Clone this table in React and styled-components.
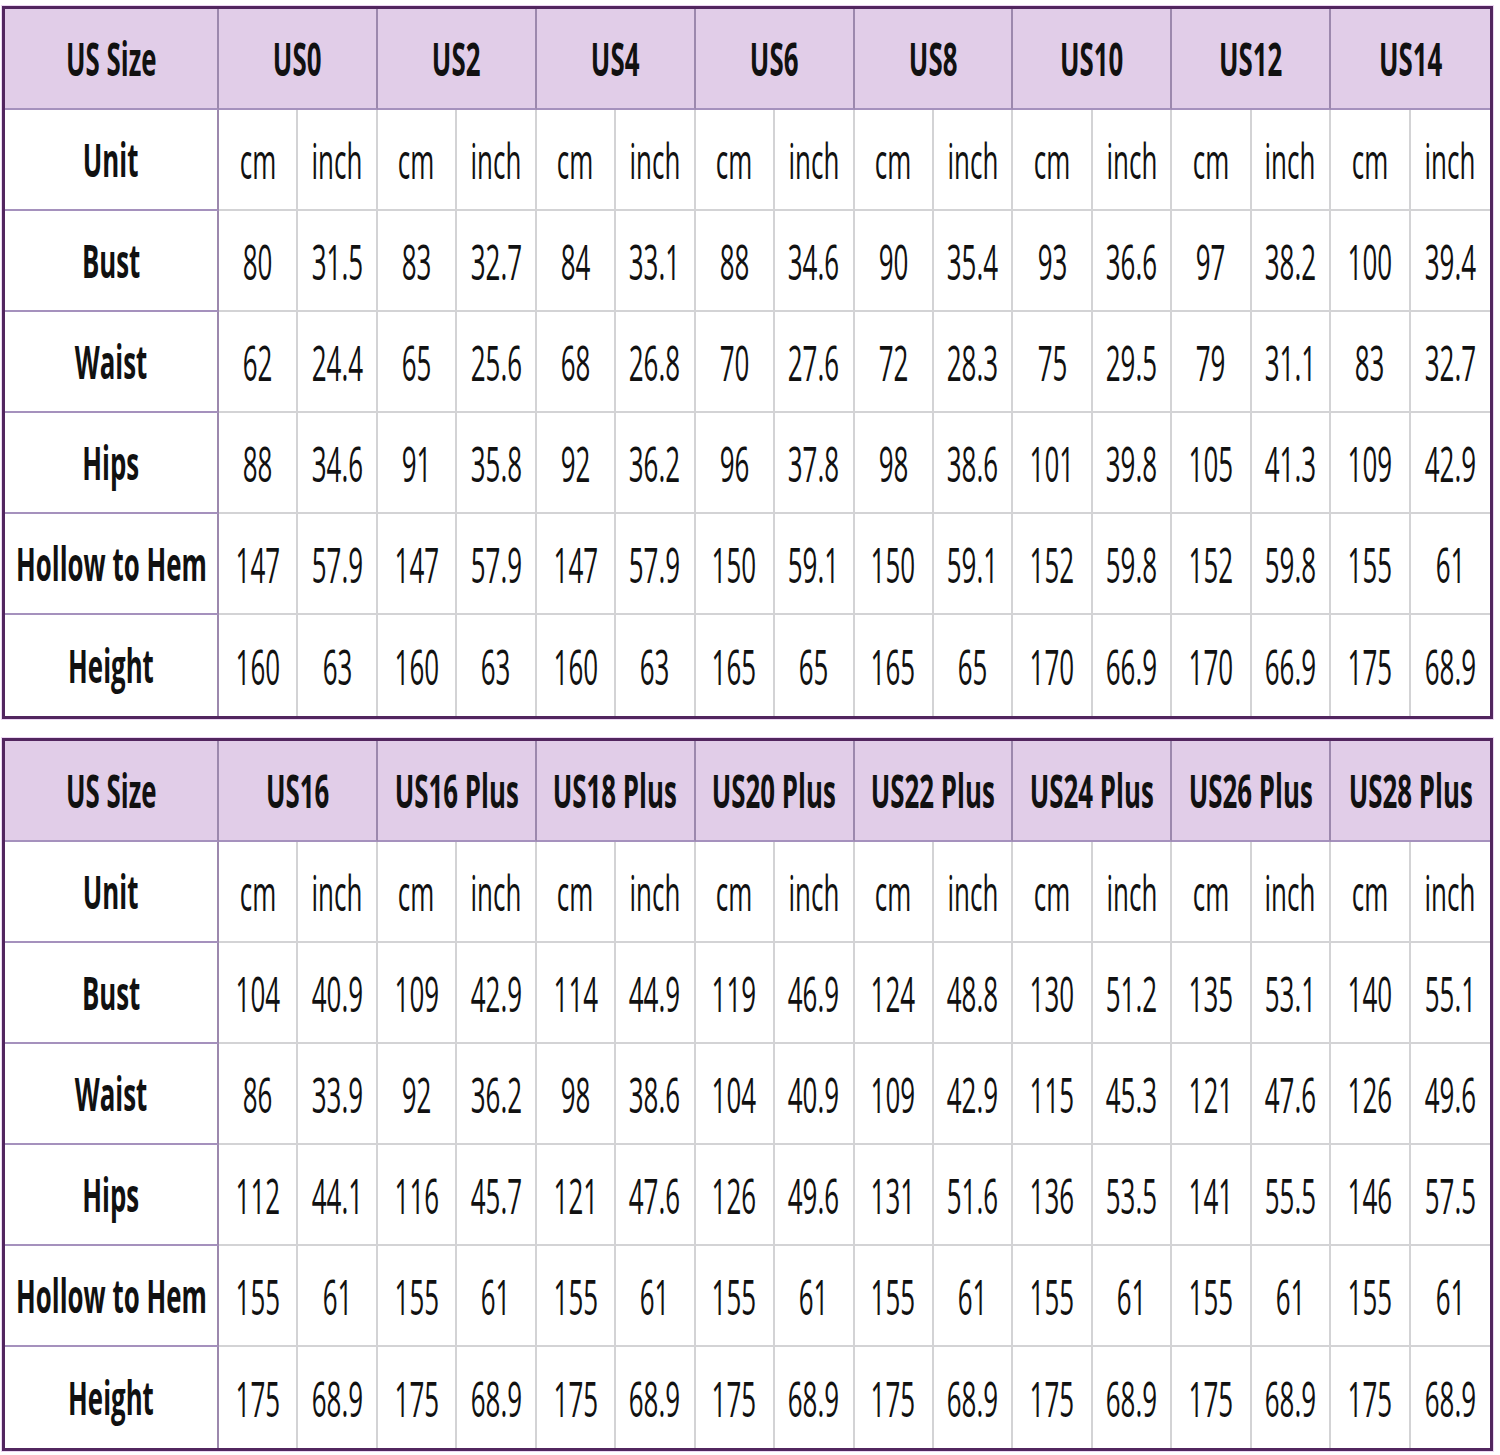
import styled, { createGlobalStyle } from "styled-components";

const GlobalStyle = createGlobalStyle`
  html, body {
    margin: 0;
    padding: 0;
    background: #ffffff;
  }
  body {
    font-family: "Open Sans", "Liberation Sans", sans-serif;
    color: #111111;
  }
`;

const charts = [
  {
    sizes: ["US0", "US2", "US4", "US6", "US8", "US10", "US12", "US14"],
    rows: [
      ["Bust", "80", "31.5", "83", "32.7", "84", "33.1", "88", "34.6", "90", "35.4", "93", "36.6", "97", "38.2", "100", "39.4"],
      ["Waist", "62", "24.4", "65", "25.6", "68", "26.8", "70", "27.6", "72", "28.3", "75", "29.5", "79", "31.1", "83", "32.7"],
      ["Hips", "88", "34.6", "91", "35.8", "92", "36.2", "96", "37.8", "98", "38.6", "101", "39.8", "105", "41.3", "109", "42.9"],
      ["Hollow to Hem", "147", "57.9", "147", "57.9", "147", "57.9", "150", "59.1", "150", "59.1", "152", "59.8", "152", "59.8", "155", "61"],
      ["Height", "160", "63", "160", "63", "160", "63", "165", "65", "165", "65", "170", "66.9", "170", "66.9", "175", "68.9"],
    ],
  },
  {
    sizes: ["US16", "US16 Plus", "US18 Plus", "US20 Plus", "US22 Plus", "US24 Plus", "US26 Plus", "US28 Plus"],
    rows: [
      ["Bust", "104", "40.9", "109", "42.9", "114", "44.9", "119", "46.9", "124", "48.8", "130", "51.2", "135", "53.1", "140", "55.1"],
      ["Waist", "86", "33.9", "92", "36.2", "98", "38.6", "104", "40.9", "109", "42.9", "115", "45.3", "121", "47.6", "126", "49.6"],
      ["Hips", "112", "44.1", "116", "45.7", "121", "47.6", "126", "49.6", "131", "51.6", "136", "53.5", "141", "55.5", "146", "57.5"],
      ["Hollow to Hem", "155", "61", "155", "61", "155", "61", "155", "61", "155", "61", "155", "61", "155", "61", "155", "61"],
      ["Height", "175", "68.9", "175", "68.9", "175", "68.9", "175", "68.9", "175", "68.9", "175", "68.9", "175", "68.9", "175", "68.9"],
    ],
  },
];

const Page = styled.div`
  padding: 6px 0 8px 2px;
  display: flex;
  flex-direction: column;
  gap: 19px;
  width: 1500px;
  box-sizing: border-box;
`;

const Chart = styled.div`
  width: 1491px;
  box-sizing: border-box;
  border: 3px solid #52265f;
  box-shadow: 0 0 0 1px #ecd6f2;
  display: grid;
  grid-template-columns: 214px repeat(16, minmax(0, 1fr));
  grid-auto-rows: 101px;
`;

const Cell = styled.div`
  display: flex;
  align-items: center;
  justify-content: center;
  min-width: 0;
  overflow: visible;
  white-space: nowrap;
  box-sizing: border-box;
  grid-column: span ${({ $span }) => $span || 1};
  background: ${({ $head }) => ($head ? "#e1cde8" : "#ffffff")};
  border-right: 2px solid
    ${({ $kind }) => ($kind === "data" ? "#d3d3d5" : "#9c88ad")};
  border-bottom: 2px solid
    ${({ $kind }) => ($kind === "data" ? "#d3d3d5" : "#a591bd")};
  ${({ $lastCol }) => $lastCol && "border-right: none;"}
  ${({ $lastRow }) => $lastRow && "border-bottom: none;"}
`;

const Text = styled.span`
  display: inline-block;
  flex-shrink: 0;
  font-size: ${({ $bold }) => ($bold ? "47px" : "50px")};
  font-weight: ${({ $bold }) => ($bold ? 700 : 400)};
  transform: scaleX(${({ $bold }) => ($bold ? 0.55 : 0.52)});
  transform-origin: center;
  line-height: 1;
  color: #111111;
`;

const SizeChart = ({ sizes, rows }) => {
  const units = [];
  sizes.forEach(() => units.push("cm", "inch"));
  const body = [["Unit", ...units], ...rows];

  return (
    <Chart>
      <Cell $head $kind="label">
        <Text $bold>US Size</Text>
      </Cell>
      {sizes.map((s, i) => (
        <Cell key={s} $head $span={2} $kind="label" $lastCol={i === sizes.length - 1}>
          <Text $bold>{s}</Text>
        </Cell>
      ))}
      {body.map((row, r) =>
        row.map((v, c) => (
          <Cell
            key={`${r}-${c}`}
            $kind={c === 0 ? "label" : "data"}
            $lastCol={c === row.length - 1}
            $lastRow={r === body.length - 1}
          >
            <Text $bold={c === 0}>{v}</Text>
          </Cell>
        ))
      )}
    </Chart>
  );
};

const App = () => (
  <>
    <GlobalStyle />
    <Page>
      {charts.map((chart, i) => (
        <SizeChart key={i} sizes={chart.sizes} rows={chart.rows} />
      ))}
    </Page>
  </>
);

export default App;
